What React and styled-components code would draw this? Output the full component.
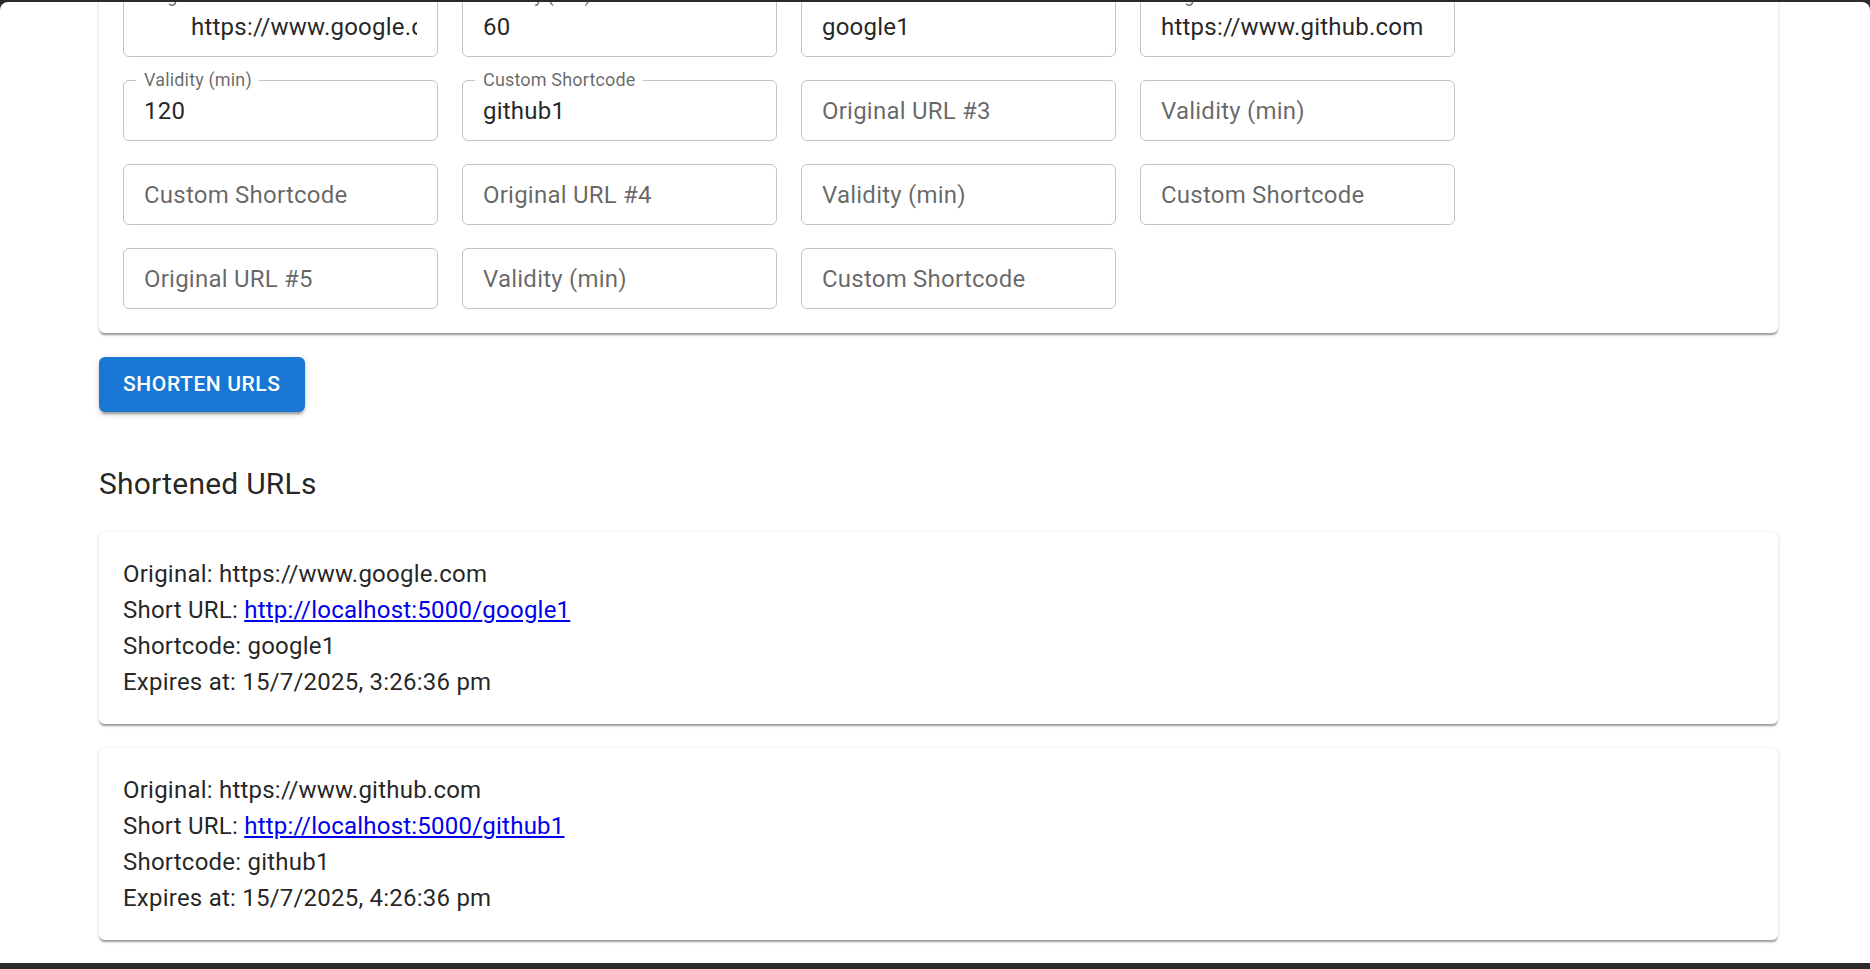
import React, { useLayoutEffect, useRef } from 'react';
import styled, { createGlobalStyle } from 'styled-components';

const GlobalStyle = createGlobalStyle`
  html, body {
    margin: 0;
    padding: 0;
    height: 100%;
    background: #2b2b2b;
  }
  body {
    font-family: Roboto, "Noto Sans", Arial, sans-serif;
  }
  #root {
    height: 100%;
  }
`;

const Screen = styled.div`
  height: 100vh;
  display: flex;
  flex-direction: column;
  padding: 2px 0 6px;
  box-sizing: border-box;
`;

const Window = styled.div`
  flex: 1;
  min-height: 0;
  background: #ffffff;
  border-radius: 8px 8px 0 0;
  overflow: hidden;
`;

const Page = styled.main`
  padding: 24px 92px 48px 99px;
  color: rgba(0, 0, 0, 0.87);
`;

const Title = styled.h1`
  margin: 0 0 24px;
  font-size: 51px;
  font-weight: 400;
  line-height: 1.235;
`;

const Paper = styled.section`
  background: #ffffff;
  border-radius: 6px;
  padding: 24px;
  box-shadow: 0 3px 1.5px -1.5px rgba(0, 0, 0, 0.2),
    0 1.5px 1.5px 0 rgba(0, 0, 0, 0.14), 0 1.5px 4.5px 0 rgba(0, 0, 0, 0.12);
`;

const FormCard = styled(Paper)`
  display: flex;
  flex-wrap: wrap;
  gap: 24px;
`;

const Field = styled.div`
  position: relative;
  width: 315px;
  height: 60px;
  flex: none;
`;

const Input = styled.input`
  display: block;
  width: 100%;
  height: 100%;
  box-sizing: border-box;
  margin: 0;
  border: 0;
  outline: 0;
  background: transparent;
  padding: 0 21px 0 ${(p) => p.$indent || 21}px;
  font-family: Roboto, "Noto Sans", Arial, sans-serif;
  font-size: 24px;
  letter-spacing: 0.225px;
  color: rgba(0, 0, 0, 0.87);
  &::placeholder {
    color: rgba(0, 0, 0, 0.6);
    opacity: 1;
  }
`;

const Outline = styled.fieldset`
  position: absolute;
  inset: -8px 0 0 0;
  margin: 0;
  padding: 0 12px;
  border: 1px solid #c4c4c4;
  border-radius: 6px;
  pointer-events: none;
  text-align: left;
  min-width: 0;
  overflow: hidden;
`;

const Notch = styled.legend`
  float: unset;
  width: auto;
  padding: 0;
  height: 16px;
  font-size: 18px;
  letter-spacing: 0.17px;
  line-height: 16px;
  visibility: hidden;
  white-space: nowrap;
  max-width: ${(p) => (p.$open ? '100%' : '0.01px')};
  span {
    display: inline-block;
    padding: 0 7.5px;
  }
`;

const Label = styled.label`
  position: absolute;
  left: 21px;
  top: -14px;
  font-size: 18px;
  letter-spacing: 0.17px;
  line-height: 26px;
  color: rgba(0, 0, 0, 0.6);
  white-space: nowrap;
  pointer-events: none;
`;

const Button = styled.button`
  display: inline-flex;
  align-items: center;
  justify-content: center;
  margin-top: 24px;
  padding: 9px 24px;
  border: 0;
  border-radius: 6px;
  background: #1976d2;
  color: #ffffff;
  font-family: Roboto, "Noto Sans", Arial, sans-serif;
  font-size: 21px;
  font-weight: 500;
  line-height: 1.75;
  letter-spacing: 0.6px;
  text-transform: uppercase;
  cursor: pointer;
  box-shadow: 0 4.5px 1.5px -3px rgba(0, 0, 0, 0.2),
    0 3px 3px 0 rgba(0, 0, 0, 0.14), 0 1.5px 7.5px 0 rgba(0, 0, 0, 0.12);
`;

const SectionTitle = styled.h2`
  margin: 48px 0 24px;
  font-size: 30px;
  font-weight: 400;
  letter-spacing: 0.225px;
  line-height: 48px;
`;

const ResultCard = styled(Paper)`
  margin-bottom: 24px;
`;

const Line = styled.p`
  margin: 0;
  font-size: 24px;
  letter-spacing: 0.225px;
  line-height: 36px;
`;

const Link = styled.a`
  color: #0000ee;
  text-decoration: underline;
`;

const fields = [
  { label: 'Original URL #1', value: 'https://www.google.com', indent: 68 },
  { label: 'Validity (min)', value: '60' },
  { label: 'Custom Shortcode', value: 'google1' },
  { label: 'Original URL #2', value: 'https://www.github.com' },
  { label: 'Validity (min)', value: '120' },
  { label: 'Custom Shortcode', value: 'github1' },
  { label: 'Original URL #3' },
  { label: 'Validity (min)' },
  { label: 'Custom Shortcode' },
  { label: 'Original URL #4' },
  { label: 'Validity (min)' },
  { label: 'Custom Shortcode' },
  { label: 'Original URL #5' },
  { label: 'Validity (min)' },
  { label: 'Custom Shortcode' },
];

const results = [
  {
    original: 'https://www.google.com',
    code: 'google1',
    expires: '15/7/2025, 3:26:36 pm',
  },
  {
    original: 'https://www.github.com',
    code: 'github1',
    expires: '15/7/2025, 4:26:36 pm',
  },
];

function TextField({ label, value, indent }) {
  const filled = Boolean(value);
  return (
    <Field>
      <Input
        readOnly
        value={value || ''}
        placeholder={filled ? '' : label}
        $indent={indent}
      />
      <Outline aria-hidden="true">
        <Notch $open={filled}>
          <span>{filled ? label : ''}</span>
        </Notch>
      </Outline>
      {filled && <Label>{label}</Label>}
    </Field>
  );
}

export default function App() {
  const windowRef = useRef(null);
  const formRef = useRef(null);

  // the reference is scrolled so the form card starts just above the view
  useLayoutEffect(() => {
    const w = windowRef.current;
    const f = formRef.current;
    const delta = f.getBoundingClientRect().top - w.getBoundingClientRect().top;
    w.scrollTop = delta + 29;
  }, []);

  return (
    <>
      <GlobalStyle />
      <Screen>
        <Window ref={windowRef}>
          <Page>
            <Title>URL Shortener</Title>
            <FormCard ref={formRef}>
              {fields.map((f, i) => (
                <TextField key={i} {...f} />
              ))}
            </FormCard>
            <Button type="button">Shorten URLs</Button>
            <SectionTitle>Shortened URLs</SectionTitle>
            {results.map((r) => (
              <ResultCard key={r.code}>
                <Line>Original: {r.original}</Line>
                <Line>
                  Short URL:{' '}
                  <Link href={`http://localhost:5000/${r.code}`}>
                    http://localhost:5000/{r.code}
                  </Link>
                </Line>
                <Line>Shortcode: {r.code}</Line>
                <Line>Expires at: {r.expires}</Line>
              </ResultCard>
            ))}
          </Page>
        </Window>
      </Screen>
    </>
  );
}
